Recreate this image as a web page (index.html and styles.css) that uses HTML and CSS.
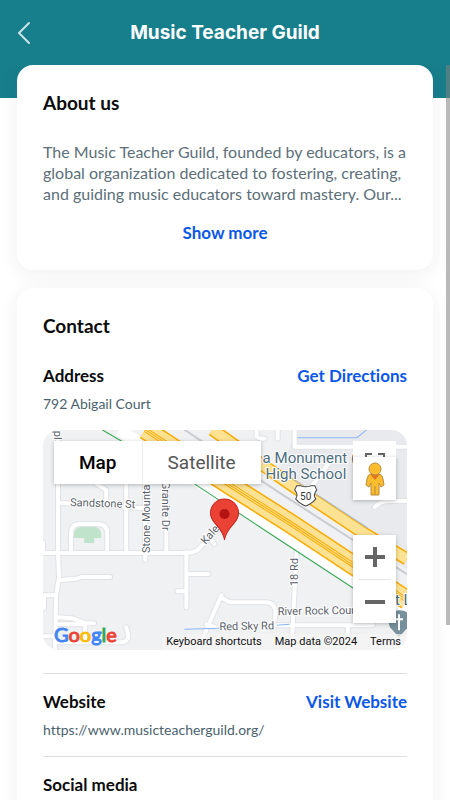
FILE: index.html
```html
<!DOCTYPE html>
<html lang="en">
<head>
<meta charset="utf-8">
<meta name="viewport" content="width=device-width, initial-scale=1">
<title>Music Teacher Guild</title>
<link rel="stylesheet" href="styles.css">
</head>
<body>
<header class="topbar">
  <button class="back" type="button" aria-label="Back">
    <svg width="14" height="24" viewBox="0 0 14 24"><path d="M12 2 2 12l10 10"/></svg>
  </button>
  <h1>Music Teacher Guild</h1>
</header>
<main class="content">
  <section class="card about">
    <h2>About us</h2>
    <p>The Music Teacher Guild, founded by educators, is a global organization dedicated to fostering, creating, and guiding music educators toward mastery. Our...</p>
    <button class="action" type="button">Show more</button>
  </section>
  <section class="card">
    <h2>Contact</h2>
    <div class="entry">
      <div class="row"><h3>Address</h3><a class="action" href="#directions">Get Directions</a></div>
      <p class="value">792 Abigail Court</p>
      <div class="map">
        <svg class="tiles" viewBox="44 430 363 220" preserveAspectRatio="xMidYMid slice">
          <rect x="44" y="430" width="363" height="220" fill="#f0f1f3"/>
          <path d="M298 430H407V570L290 485L280 470Z" fill="#e8eaed"/>
          <g class="casing">
            <path id="streets" d="M59 430V552L60 578 57 595 56 650M44 553H187Q197 553 202 546L228 520M187 552V607M187 574H209M178 591H187M167 470V552M146 480V560M127 480V552M62 503 145 508M97 484 107 490V505M72 552V533Q72 524 81 524H98Q108 524 108 533V552M60 580 76 579 82 577 111 577M44 595H57M45 595V608M59 617 73 618 86 623H95M60 624H86V640M44 636H56M60 642H123Q129 641 129 635L127 627M222 595 198 650M223 598 230 602H266Q275 602 276 612L275 620M207 624 218 628M210 538 215 544M297 552 293 625 292 650M276 625H373M348 625V650M44 542V552M295 430V447H407M330 462 313 485M257 430V437Q258 439 265 439M278 430V439M375 507Q380 501 390 501H407"/>
          </g>
          <g class="street"><use href="#streets"/></g>
          <path d="M75 535Q75 527 82 527H95Q102 527 102 535V538H95V543H85V538H75Z" fill="#c0e3cb"/>
          <path d="M298 438H357L367 430" class="water"/>
          <path d="M185 629 220 628M277 625 290 624M290 478 310 494" class="water"/>
          <path d="M120 430 204 485 290 538 407 614" stroke="#fff" stroke-width="12"/>
          <path d="M103 430 195 484 280 540 407 623" stroke="#34a853" stroke-width="1"/>
          <path d="M185 430 280 493 350 538 407 574" stroke="#c9ccd0" stroke-width="2"/>
          <path d="M146 430 230 485 290 523 352 564 407 600" stroke="#f9ab00" stroke-width="20"/>
          <path d="M146 430 230 485 290 523 352 564 407 600" stroke="#fde293" stroke-width="17"/>
          <path d="M146 430 230 485 290 523 352 564 407 600" stroke="#f9ab00" stroke-width="5"/>
          <path d="M146 430 230 485 290 523 352 564 407 600" stroke="#fde293" stroke-width="3"/>
          <path d="M146 430 230 485 290 523 352 564 407 600" stroke="#f9ab00" stroke-width="1"/>
          <path d="M213 430 287 482 362 532 407 559" stroke="#f9ab00" stroke-width="13"/>
          <path d="M213 430 287 482 362 532 407 559" stroke="#fde293" stroke-width="10"/>
          <path d="M293 479 368 528" stroke="#a7bfe0" stroke-width="1"/>
          <path d="M297 486H301Q306 488 311 486H315L317 490Q313 495 316 499Q312 504 306 506Q300 504 296 499Q299 495 295 490Z" fill="#fff" stroke="#444" stroke-width="1"/>
          <path d="M399 637 390 627Q384 610 399 610Q414 610 408 627Z" fill="#78909c"/>
          <path d="M399 614V630M395 619H403" stroke="#fff" stroke-width="2"/>
          <g class="labels">
            <text x="306" y="500" text-anchor="middle" class="shield">50</text>
            <text x="71" y="506" transform="rotate(2 71 506)">Sandstone St</text>
            <text transform="translate(151 553) rotate(-90)">Stone Mountain</text>
            <text transform="translate(163 482) rotate(90)">Granite Dr</text>
            <text transform="translate(55 431) rotate(90)">pl</text>
            <text transform="translate(206 545) rotate(-48)">Kalex</text>
            <text transform="translate(298 586) rotate(-90)">18 Rd</text>
            <text x="278" y="615" transform="rotate(-1 278 615)">River Rock Court</text>
            <text x="220" y="630" transform="rotate(-1 220 630)">Red Sky Rd</text>
            <g class="place">
              <text x="263" y="463">a Monument (</text>
              <text x="266" y="479">High School</text>
              <text x="395" y="605">t L</text>
            </g>
          </g>
          <path d="M225 540C223 526 211 524 211 513A14 14 0 0 1 239 513C239 524 227 526 225 540Z" fill="#ea4335" stroke="#c5221f" stroke-width="1"/>
          <circle cx="225" cy="514" r="5" fill="#b31412"/>
        </svg>
        <div class="map-types">
          <button type="button" class="current">Map</button>
          <button type="button">Satellite</button>
        </div>
        <div class="map-view">
          <button class="fullscreen" type="button" aria-label="Full screen"><svg width="20" height="4" viewBox="0 0 20 4"><path d="M0 0H7V2H2V4H0ZM13 0H20V4H18V2H13Z" fill="#666"/></svg></button>
          <button class="pegman" type="button" aria-label="Street View">
            <svg width="20" height="34" viewBox="0 0 20 34"><path d="M6 12H14Q17 12 18 17L19 23 16 25 14 21V33H6V21L4 25 1 23 2 17Q3 12 6 12Z" fill="#fbbc2d" stroke="#b98a3c"/><path d="M5 12H15L10 18Z" fill="#e37422"/><circle cx="10" cy="7" r="6" fill="#fbbc2d" stroke="#b98a3c"/><path d="M10 24V33" stroke="#b98a3c"/></svg>
          </button>
        </div>
        <div class="zoom">
          <button type="button" aria-label="Zoom in"><svg width="20" height="20" viewBox="0 0 20 20"><path d="M8 0H12V8H20V12H12V20H8V12H0V8H8Z"/></svg></button>
          <button type="button" aria-label="Zoom out"><svg width="20" height="20" viewBox="0 0 20 20"><path d="M0 8H20V12H0Z"/></svg></button>
        </div>
        <a class="google" href="#google" aria-label="Google"><span class="blue">G</span><span class="red">o</span><span class="yellow">o</span><span class="blue">g</span><span class="green">l</span><span class="red">e</span></a>
        <div class="credits"><button type="button">Keyboard shortcuts</button><span>Map data ©2024</span><a href="#terms">Terms</a></div>
      </div>
    </div>
    <div class="entry">
      <div class="row"><h3>Website</h3><a class="action" href="#website">Visit Website</a></div>
      <p class="value">https://www.musicteacherguild.org/</p>
    </div>
    <div class="entry">
      <div class="row"><h3>Social media</h3></div>
    </div>
  </section>
</main>
<div class="scroll-thumb"></div>
</body>
</html>
```
FILE: styles.css
```css
* { box-sizing: border-box; }
body {
  margin: 0;
  height: 100vh;
  display: flex;
  flex-direction: column;
  overflow: hidden;
  position: relative;
  background: linear-gradient(#177e8b 98px, #fff 98px);
  font-family: "Lato", sans-serif;
  font-variant-ligatures: none;
  color: #0c0c0c;
}
h1, h2, h3, p { margin: 0; }
button { border: 0; padding: 0; background: none; font: inherit; color: inherit; cursor: pointer; }
a { text-decoration: none; color: inherit; }
.topbar {
  flex: none;
  height: 65px;
  display: grid;
  grid-template-columns: 48px 1fr 48px;
  align-items: center;
  color: #fff;
}
.back { display: flex; padding-left: 17px; }
.back path { fill: none; stroke: #c9e2e5; stroke-width: 2; stroke-linecap: round; stroke-linejoin: round; }
h1 { font: 700 19px/24px "Inter", sans-serif; text-align: center; }
.content {
  flex: 1;
  min-height: 0;
  overflow: hidden;
  padding: 0 17px;
  display: flex;
  flex-direction: column;
  gap: 18px;
}
.card {
  flex: none;
  padding: 25px 26px;
  border-radius: 16px;
  background: #fff;
  box-shadow: 0 4px 20px rgba(40, 40, 90, 0.07);
}
h2 { font-size: 19px; line-height: 26px; font-weight: 700; }
h3, .action { font-size: 17px; line-height: 24px; font-weight: 700; }
.action { color: #0b57e8; }
.about { display: flex; flex-direction: column; }
.about p { margin: 25px 0 17px; font-size: 16px; line-height: 21px; color: #5c6f7a; }
.about .action { align-self: center; }
.entry { padding-bottom: 16px; }
.entry + .entry { border-top: 1px solid #dfdfdf; padding-top: 16px; }
h2 + .entry { padding: 25px 0 23px; }
.row { display: flex; justify-content: space-between; }
.value { margin-top: 6px; font-size: 14px; line-height: 20px; color: #4b626e; }
.map {
  position: relative;
  height: 220px;
  margin-top: 16px;
  border-radius: 16px;
  overflow: hidden;
  font-family: "Roboto", sans-serif;
}
.tiles { display: block; width: 100%; height: 100%; fill: none; }
.casing { stroke: #e0e2e6; stroke-width: 6; stroke-linecap: round; stroke-linejoin: round; }
.street { stroke: #fff; stroke-width: 4; stroke-linecap: round; stroke-linejoin: round; }
.water { stroke: #8ab4f8; stroke-width: 1; }
.labels { font-size: 11px; fill: #5b626b; stroke: #fff; stroke-width: 2; paint-order: stroke; }
.labels .shield { font-size: 10px; fill: #333; stroke: none; }
.place { font-size: 15px; fill: #4d6c7c; }
.map-types, .map-view, .zoom { position: absolute; }
.map-types { top: 11px; left: 11px; display: flex; box-shadow: 0 1px 4px rgba(0, 0, 0, 0.25); }
.map-types button { height: 43px; padding: 0 25px; background: #fff; font-size: 19px; color: #565656; }
.map-types .current { color: #000; font-weight: 500; border-right: 1px solid #eee; }
.map-view { top: 11px; right: 11px; width: 43px; display: flex; flex-direction: column; }
.map-view button { display: flex; justify-content: center; background: #fff; }
.map-view .fullscreen { height: 16px; padding-top: 12px; }
.map-view .pegman { height: 43px; align-items: center; box-shadow: 0 1px 4px rgba(0, 0, 0, 0.25); }
.zoom { right: 11px; bottom: 27px; width: 43px; padding: 0 5px; background: #fff; box-shadow: 0 1px 4px rgba(0, 0, 0, 0.25); }
.zoom button { display: flex; width: 100%; height: 44px; align-items: center; justify-content: center; fill: #666; }
.zoom button + button { border-top: 1px solid #e6e6e6; }
.google { position: absolute; left: 11px; bottom: 4px; font: 400 20px/24px "Lato", sans-serif; -webkit-text-stroke: 1px currentColor; }
.blue { color: #4285f4; }
.red { color: #ea4335; }
.yellow { color: #fbbc04; }
.green { color: #34a853; }
.credits {
  position: absolute;
  right: 0;
  bottom: 0;
  display: flex;
  gap: 13px;
  padding: 0 6px 0 4px;
  font-size: 11px;
  line-height: 16px;
  color: #111;
  background: rgba(245, 245, 245, 0.7);
}
.scroll-thumb { position: absolute; top: 65px; right: 0; width: 4px; height: 70%; background: rgba(128, 128, 128, 0.55); }
```
